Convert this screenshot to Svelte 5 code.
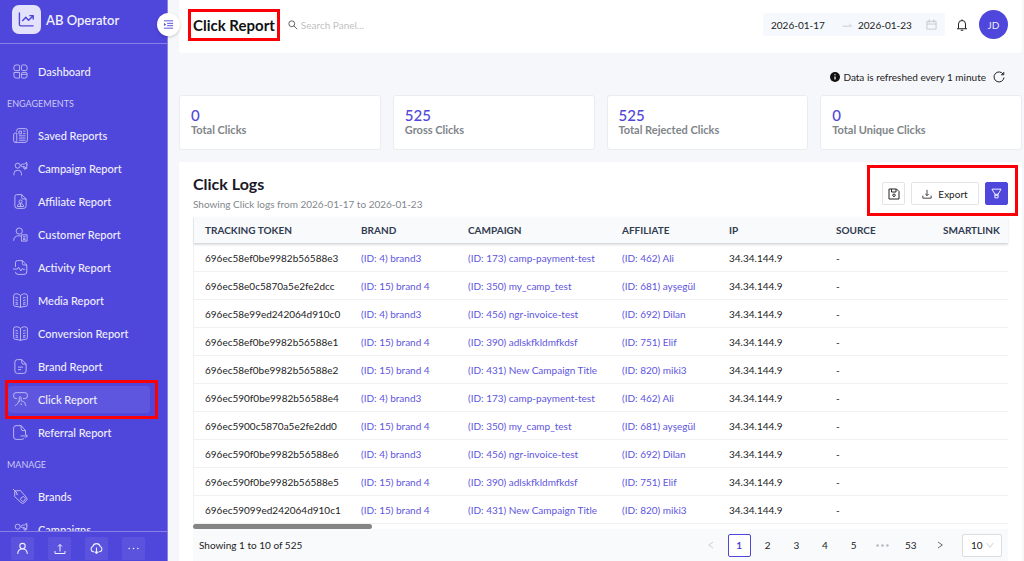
<script>
  const icons = {
    dashboard: 'M5 1.5h3.5a2 2 0 0 1 2 2V10.5h-7a2 2 0 0 1-2-2V5A3.5 3.5 0 0 1 5 1.5zM13.5 3.5a2 2 0 0 1 2-2H19A3.5 3.5 0 0 1 22.5 5v3.500a2 2 0 0 1-2 2h-5a2 2 0 0 1-2-2zM1.500 13.500h9v9H5a3.500 3.500 0 0 1-3.500-3.500zM13.500 15.500a2 2 0 0 1 2-2h5a2 2 0 0 1 2 2V19a3.500 3.500 0 0 1-3.500 3.500h-3.500a2 2 0 0 1-2-2zM13.500 16.500h9',
    saved: 'M6 6V4a3 3 0 0 1 3-3h11a3 3 0 0 1 3 3v15a4 4 0 0 1-4 4H4a3 3 0 0 1-3-3v-9a3 3 0 0 1 3-3h2v12a2.500 2.500 0 0 1-2.500 2.500M9.500 5h4v4.500h-4zM16 5h4M16 9h4M9.500 12.500H20M9.500 16H20M9.500 19.500H20',
    campaign: 'M1.500 23v-3a5 5 0 0 1 5-5h2a5 5 0 0 1 5 5v3M7.500 3.500a4 4 0 1 1 0 8 4 4 0 0 1 0-8M15 5h3l4-3v10l-4-3h-3a2 2 0 0 1 0-4zM17 9l1 4h2l-.600-2.500M22 6h1.500',
    affiliate: 'M6 1h8l7 7v11a4 4 0 0 1-4 4H7a4 4 0 0 1-4-4V4a3 3 0 0 1 3-3M14 1v5a2 2 0 0 0 2 2h5M12 9.500a2.500 2.500 0 1 1 0 5 2.500 2.500 0 0 1 0-5M7 20c0-3 2-4.500 5-4.500s5 1.500 5 4.500zM12 16v4',
    customer: 'M10 1.500a5 5 0 1 1 0 10 5 5 0 0 1 0-10M1 22c0-5 3.500-8 8-8 1.500 0 2.500.300 3.500.800M13.500 12.500h9v10h-9zM16 15.500h4M16 18h4M16 20.200h4',
    activity: 'M4 11V4a3 3 0 0 1 3-3h8l7 7v11a4 4 0 0 1-4 4H8a4 4 0 0 1-4-4M15 1v5a2 2 0 0 0 2 2h5M0 14.500h7l2-3 3.500 6 2.500-4 1 1.500h3',
    book: 'M12 4C9 1 5 1 3.500 1.500A3 3 0 0 0 1 4.500v14a3 3 0 0 0 3 3c3 0 5 .3 8 1.500 3-1.200 5-1.500 8-1.500a3 3 0 0 0 3-3v-14a3 3 0 0 0-2.500-3C19 1 15 1 12 4zM12 4v19M4 7l4 1M4 11l4 1M4 15l4 1M4 18h4M20 7l-4 1M20 11l-4 1M20 15l-4 1M20 18h-4',
    brandReport: 'M7 1h7l7 7v11a4 4 0 0 1-4 4H7a4 4 0 0 1-4-4V5a4 4 0 0 1 4-4M14 1v5a2 2 0 0 0 2 2h5M8 13h8M8 17h5',
    click: 'M6.500 10.500H5a4 4 0 0 1-4-4V5a4 4 0 0 1 4-4h14a4 4 0 0 1 4 4v1.500a4 4 0 0 1-4 4h-3M10 16V9a1.500 1.500 0 0 1 3 0v5l4 1.500c2 .500 2 2 2.500 4 .300 1 .800 2 1.500 3M10 14c-2 .500-1 3-3 5-1 1-2.500 2-4 3M13 18v3',
    referral: 'M20 15V9l-7-8H5a4 4 0 0 0-4 4v14a4 4 0 0 0 4 4h9a5 5 0 0 0 4-2M13 1v5a3 3 0 0 0 3 3h4M12 17.500h11M20 14.500l3 3-3 3',
    tag: 'M3 3l9-.500 9.500 11a4 4 0 0 1-.500 5.500l-3 3a4 4 0 0 1-5.500-.500L2.500 12zM0 0l7 7M13 14l4-2 3 3-2 4-3 1-3-3zM6 6a1.500 1.500 0 1 0 2 2'
  };
  const engagements = [
    ['Saved Reports', 'saved'], ['Campaign Report', 'campaign'], ['Affiliate Report', 'affiliate'],
    ['Customer Report', 'customer'], ['Activity Report', 'activity'], ['Media Report', 'book'],
    ['Conversion Report', 'book'], ['Brand Report', 'brandReport'], ['Click Report', 'click'],
    ['Referral Report', 'referral']
  ];
  const manage = [['Brands', 'tag'], ['Campaigns', 'campaign']];
  const stats = [['0', 'Total Clicks'], ['525', 'Gross Clicks'], ['525', 'Total Rejected Clicks'], ['0', 'Total Unique Clicks']];
  const columns = ['TRACKING TOKEN', 'BRAND', 'CAMPAIGN', 'AFFILIATE', 'IP', 'SOURCE', 'SMARTLINK'];
  const tokens = [
    '696ec58ef0be9982b56588e3', '696ec58e0c5870a5e2fe2dcc', '696ec58e99ed242064d910c0', '696ec58ef0be9982b56588e1',
    '696ec58ef0be9982b56588e2', '696ec590f0be9982b56588e4', '696ec5900c5870a5e2fe2dd0', '696ec590f0be9982b56588e6',
    '696ec590f0be9982b56588e5', '696ec59099ed242064d910c1'
  ];
  const targets = [
    ['(ID: 4) brand3', '(ID: 173) camp-payment-test', '(ID: 462) Ali'],
    ['(ID: 15) brand 4', '(ID: 350) my_camp_test', '(ID: 681) ayşegül'],
    ['(ID: 4) brand3', '(ID: 456) ngr-invoice-test', '(ID: 692) Dilan'],
    ['(ID: 15) brand 4', '(ID: 390) adlskfkldmfkdsf', '(ID: 751) Elif'],
    ['(ID: 15) brand 4', '(ID: 431) New Campaign Title', '(ID: 820) miki3']
  ];
  const rows = tokens.map((token, i) => ({ token, links: targets[i % 5] }));
</script>

{#snippet navItem(label, icon)}
  <a href="#top" class="item" class:active={label === 'Click Report'} class:marked={label === 'Click Report'}>
    <svg class="line" viewBox="0 0 24 24" width="15" height="15" aria-hidden="true"><path d={icons[icon]} /></svg>
    {label}
  </a>
{/snippet}

<div class="app" id="top">
  <aside>
    <div class="brand">
      <span class="logo">
        <svg viewBox="0 0 24 24" width="17" height="17" aria-hidden="true"><path d="M2 2v17a2 2 0 0 0 2 2h18M6 14l5-5 4 4 6-6M16 6.500h5.500V12" /></svg>
      </span>
      AB Operator
    </div>
    <button class="collapse" aria-label="Collapse menu">
      <svg viewBox="0 0 24 24" width="11" height="11" aria-hidden="true"><path d="M2 4h20M9 9.500h13M9 14.500h13M2 20h20" /><path class="solid" d="M2 8.500l5 3.500-5 3.500z" /></svg>
    </button>
    <nav>
      {@render navItem('Dashboard', 'dashboard')}
      <h2>ENGAGEMENTS</h2>
      {#each engagements as [label, icon]}{@render navItem(label, icon)}{/each}
      <h2>MANAGE</h2>
      {#each manage as [label, icon]}{@render navItem(label, icon)}{/each}
    </nav>
    <div class="tools">
      <button aria-label="Profile"><svg viewBox="0 0 24 24" width="13" height="13"><path d="M12 2.500a5 5 0 1 1 0 10 5 5 0 0 1 0-10M3 22c.500-5.500 4-9 9-9s8.500 3.500 9 9" /></svg></button>
      <button aria-label="Upload"><svg viewBox="0 0 24 24" width="12" height="12"><path d="M12 17V3M8 7l4-4 4 4M2 16v5h20v-5" /></svg></button>
      <button aria-label="Cloud download"><svg viewBox="0 0 24 24" width="13" height="13"><path d="M8 18H6a5 5 0 0 1-1-9.500C6 5 8.500 3 12 3s6 2 7 5.500A5 5 0 0 1 18 18h-2M12 10v11M9 18l3 3 3-3" /></svg></button>
      <button aria-label="More"><svg viewBox="0 0 24 24" width="13" height="13"><g class="dots"><circle cx="4" cy="12" r="1.500" /><circle cx="12" cy="12" r="1.500" /><circle cx="20" cy="12" r="1.500" /></g></svg></button>
    </div>
  </aside>

  <main>
    <header>
      <h1 class="marked">Click Report</h1>
      <label class="search">
        <svg viewBox="0 0 24 24" width="10" height="10" aria-hidden="true"><path d="M9 2a7 7 0 1 1 0 14A7 7 0 0 1 9 2M14 14l8 8" /></svg>
        <input type="text" placeholder="Search Panel..." aria-label="Search panel" />
      </label>
      <div class="dates">
        <input type="text" value="2026-01-17" aria-label="Start date" />
        <svg viewBox="0 0 24 24" width="10" height="10" aria-hidden="true"><path d="M1 15h22l-6-6" /></svg>
        <input type="text" value="2026-01-23" aria-label="End date" />
        <svg viewBox="0 0 24 24" width="11" height="11" aria-hidden="true"><path d="M2 5h20v17H2zM2 11h20M7 1v7M17 1v7" /></svg>
      </div>
      <button class="bell" aria-label="Notifications"><svg viewBox="0 0 24 24" width="12" height="12"><path d="M5 19V10a7 7 0 0 1 14 0v9M2 19.500h20M12 1v2M9.500 22.500h5" /></svg></button>
      <button class="avatar">JD</button>
    </header>

    <div class="refresh">
      <svg class="info" viewBox="0 0 24 24" width="10" height="10" aria-hidden="true"><circle cx="12" cy="12" r="12" /><path d="M12 10.500V18M12 5.500v2.500" /></svg>
      <span>Data is refreshed every 1 minute</span>
      <button aria-label="Refresh"><svg viewBox="0 0 24 24" width="12" height="12"><path d="M20.500 6.500A10 10 0 1 0 22 13M21.500 2v5.500H16" /></svg></button>
    </div>

    <section class="stats">
      {#each stats as [value, label]}
        <div class="card"><strong>{value}</strong><span>{label}</span></div>
      {/each}
    </section>

    <section class="panel">
      <div class="head">
        <div>
          <h2>Click Logs</h2>
          <p>Showing Click logs from 2026-01-17 to 2026-01-23</p>
        </div>
        <div class="actions marked">
          <button class="square" aria-label="Save"><svg viewBox="0 0 24 24" width="12" height="12"><path d="M2 2h15l5 5v15H2zM7 2v6h9V2M12 12a2.500 2.500 0 1 1 0 5 2.500 2.500 0 0 1 0-5" /></svg></button>
          <button class="export"><svg viewBox="0 0 24 24" width="10" height="10" aria-hidden="true"><path d="M12 2v14M8 12l4 4 4-4M2 16v6h20v-6" /></svg>Export</button>
          <button class="square filter" aria-label="Filter"><svg viewBox="0 0 24 24" width="11" height="11"><path d="M2 2.500h20l-6.500 11h-7zM8.500 13.500v8h7v-8M8.500 16h7" /></svg></button>
        </div>
      </div>

      <table>
        <colgroup><col class="wide" /><col class="unit" /><col class="mid" /><col class="unit" /><col class="unit" /><col class="unit" /><col /></colgroup>
        <thead><tr>{#each columns as column}<th scope="col">{column}</th>{/each}</tr></thead>
        <tbody>
          {#each rows as row}
            <tr>
              <td>{row.token}</td>
              {#each row.links as link}<td><a href="#top">{link}</a></td>{/each}
              <td>34.34.144.9</td>
              <td>-</td>
              <td></td>
            </tr>
          {/each}
        </tbody>
      </table>
      <div class="track"><div class="thumb"></div></div>

      <footer>
        <span>Showing 1 to 10 of 525</span>
        <div class="pages">
          <button class="prev" aria-label="Previous page"><svg viewBox="0 0 24 24" width="8" height="8"><path d="M18 3L5 12l13 9" /></svg></button>
          <button class="current">1</button>
          <button>2</button><button>3</button><button>4</button><button>5</button>
          <button class="prev" aria-label="More pages"><svg viewBox="0 0 24 24" width="13" height="13"><g class="dots"><circle cx="3" cy="12" r="2.500" /><circle cx="12" cy="12" r="2.500" /><circle cx="21" cy="12" r="2.500" /></g></svg></button>
          <button>53</button>
          <button aria-label="Next page"><svg viewBox="0 0 24 24" width="8" height="8"><path d="M6 3l13 9-13 9" /></svg></button>
        </div>
        <div class="size">
          <select aria-label="Rows per page"><option>10</option><option>20</option><option>50</option></select>
          <svg viewBox="0 0 24 24" width="8" height="8" aria-hidden="true"><path d="M2 6l10 13L22 6" /></svg>
        </div>
      </footer>
    </section>
  </main>
</div>

<style>
  :global(body) { background: #f6f7fa; overflow: hidden; }
  .app {
    --violet: #4f46db;
    display: grid;
    grid-template-columns: 168px minmax(0, 1fr);
    height: 100vh;
    color: #222;
    font: 10px/14px Lato, sans-serif;
  }
  * { box-sizing: border-box; }
  h1, h2, p { margin: 0; }
  a { color: inherit; text-decoration: none; }
  button, input, select { font: inherit; color: inherit; padding: 0; margin: 0; border: 0; background: none; outline: 0; }
  button { display: flex; align-items: center; justify-content: center; }
  svg { flex: none; fill: none; stroke: currentColor; stroke-width: 2; stroke-linejoin: round; }
  .dots, .solid { fill: currentColor; stroke: none; }
  .marked { position: relative; }
  .marked::after { content: ''; position: absolute; inset: -6px -5px; border: 3px solid #fb0007; pointer-events: none; }

  aside { position: relative; display: flex; flex-direction: column; min-height: 0; background: var(--violet); border-right: 1px solid #8a84e6; color: #f0effc; }
  .brand { display: flex; align-items: center; gap: 5px; height: 44px; padding: 0 12px 4px; border-bottom: 1px solid #8781e6; font-size: 13px; font-weight: 600; }
  .logo { display: grid; place-items: center; width: 29px; height: 29px; border-radius: 7px; background: #e4e2fb; color: var(--violet); }
  .collapse { position: absolute; z-index: 2; top: 13px; right: -13px; width: 23px; height: 23px; border-radius: 50%; background: #fff; color: var(--violet); box-shadow: 0 1px 3px #0003; }
  nav { flex: 1; min-height: 0; overflow: hidden; display: flex; flex-direction: column; gap: 6px; padding: 14px 9px 0 8px; }
  .item { display: flex; flex: none; align-items: center; gap: 10px; height: 27px; margin-right: 8px; padding-left: 5px; border-radius: 4px; font-size: 11px; font-weight: 500; }
  .line { stroke-width: 1.4; color: #c9c6f5; }
  .active { background: #5e56df; }
  .item.marked::after { inset: -6px -8px -6px -3px; }
  nav h2 { flex: none; height: 25px; margin-left: -1px; font-size: 9px; font-weight: 400; line-height: 25px; color: #cbc8f5; }
  .tools { display: flex; flex: none; gap: 14px; height: 30px; padding: 5px 11px 0; border-top: 1px solid #8781e6; }
  .tools button { width: 23px; height: 23px; border-radius: 2px; background: #5b53de; }

  main { display: flex; flex-direction: column; min-width: 0; padding: 0 2px 0 11px; }
  header { display: flex; flex: none; align-items: center; height: 53px; padding: 0 14px 4px; background: #fff; border-radius: 0 0 3px 3px; }
  h1 { font-size: 15px; line-height: 20px; font-weight: 700; color: #111; }
  .search { display: flex; align-items: center; gap: 3px; margin-left: 13px; color: #444; }
  .search input { width: 120px; }
  .search input::placeholder { color: #bfbfbf; opacity: 1; }
  .dates { display: flex; align-items: center; height: 23px; margin-left: auto; padding: 0 8px; border-radius: 3px; background: #f5f8fc; }
  .dates input { width: 68px; }
  .dates input:first-child { width: 71px; }
  .dates svg { color: #b9bcc2; stroke-width: 1.6; }
  .dates svg:nth-of-type(1) { margin-right: 6px; }
  .bell { width: 34px; height: 24px; color: #222; }
  .avatar { width: 29px; height: 29px; border-radius: 50%; background: var(--violet); color: #f0effc; }

  .refresh { display: flex; align-items: center; justify-content: flex-end; gap: 3px; height: 42px; padding: 6px 15px 0 0; }
  .refresh button { width: 16px; height: 16px; margin-left: 2px; }
  .info circle { fill: #111; stroke: none; }
  .info path { stroke: #fff; stroke-width: 3; }
  .stats { display: grid; grid-template-columns: repeat(4, minmax(0, 1fr)); gap: 12px; }
  .card { display: flex; flex-direction: column; height: 55px; padding: 11px; border: 1px solid #ebecef; border-radius: 3px; background: #fff; }
  .card strong { font-size: 15px; line-height: 16px; font-weight: 500; color: var(--violet); }
  .card span { font-size: 11px; font-weight: 700; color: #808589; }

  .panel { flex: 1; margin-top: 12px; padding: 12px 14px 0; background: #fff; }
  .head { display: flex; align-items: flex-start; justify-content: space-between; height: 43px; }
  .head h2 { font-size: 16px; line-height: 20px; font-weight: 700; color: #1b1828; }
  .head p { line-height: 20px; color: #82878c; }
  .actions { display: flex; gap: 6px; margin-top: 8px; }
  .actions.marked::after { inset: -17px -10px -11px -15px; }
  .actions button { height: 23px; border: 1px solid #e3e4e8; border-radius: 2px; background: #fff; }
  .actions .square { width: 23px; }
  .actions .export { gap: 6px; width: 68px; }
  .actions .filter { border-color: var(--violet); background: var(--violet); color: #fff; }

  table { width: 100%; table-layout: fixed; border-collapse: separate; border-spacing: 0; border-left: 1px solid #f0f1f3; }
  .wide { width: 156px; }
  .mid { width: 154px; }
  .unit { width: 107px; }
  th, td { padding: 0 0 0 11px; text-align: left; white-space: nowrap; }
  th { height: 27px; background: #f9fafc; color: #313b4f; font-weight: 700; border-bottom: 1px solid #d9dadd; }
  thead { box-shadow: 0 1px 2px #0002; }
  td { height: 28px; border-bottom: 1px solid #f0f1f3; }
  td a { color: #5e55dd; }
  .track { height: 5px; }
  .thumb { width: 22%; height: 5px; border-radius: 3px; background: #858585; }
  footer { display: flex; align-items: center; height: 32px; padding: 0 6px; background: #f9fafc; }
  .pages { display: flex; justify-content: space-between; width: 252px; margin-left: auto; }
  .pages button { width: 23px; height: 23px; border-radius: 2px; }
  .pages .prev { color: #b9bbc0; }
  .pages .current { border: 1px solid var(--violet); background: #fff; color: var(--violet); font-weight: 700; }
  .size { display: flex; align-items: center; position: relative; width: 40px; height: 23px; margin-left: 11px; border: 1px solid #dcdde1; border-radius: 2px; background: #fff; }
  .size select { width: 100%; height: 100%; padding-left: 8px; appearance: none; }
  .size svg { position: absolute; right: 7px; color: #b9bbc0; pointer-events: none; }
</style>
